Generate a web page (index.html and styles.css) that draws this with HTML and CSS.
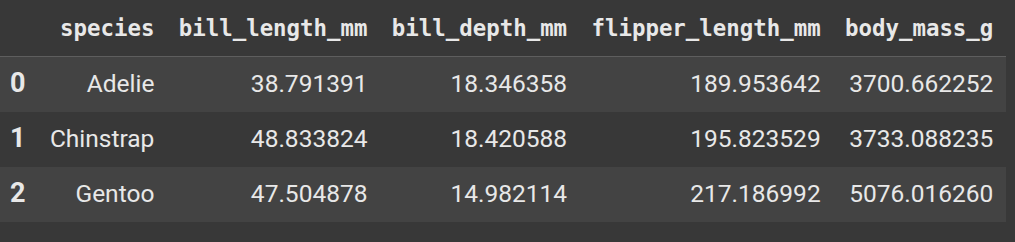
FILE: index.html
```html
<!DOCTYPE html>
<html>
<head>
<meta charset="utf-8">
<link rel="stylesheet" href="styles.css">
</head>
<body>
<table class="df">
  <thead>
    <tr>
      <th class="idx"></th>
      <th>species</th>
      <th>bill_length_mm</th>
      <th>bill_depth_mm</th>
      <th>flipper_length_mm</th>
      <th>body_mass_g</th>
    </tr>
  </thead>
  <tbody>
    <tr class="odd">
      <th class="idx">0</th>
      <td>Adelie</td>
      <td>38.791391</td>
      <td>18.346358</td>
      <td>189.953642</td>
      <td>3700.662252</td>
    </tr>
    <tr>
      <th class="idx">1</th>
      <td>Chinstrap</td>
      <td>48.833824</td>
      <td>18.420588</td>
      <td>195.823529</td>
      <td>3733.088235</td>
    </tr>
    <tr class="odd">
      <th class="idx">2</th>
      <td>Gentoo</td>
      <td>47.504878</td>
      <td>14.982114</td>
      <td>217.186992</td>
      <td>5076.016260</td>
    </tr>
  </tbody>
</table>
</body>
</html>
```
FILE: styles.css
```css
html, body {
  margin: 0;
  padding: 0;
  background: #383838;
}
body {
  width: 1015px;
  height: 242px;
  overflow: hidden;
}
.df {
  border-collapse: collapse;
  border-spacing: 0;
  color: #e8e8e8;
}
.df thead th {
  font-family: "DejaVu Sans Mono", monospace;
  font-weight: bold;
  font-size: 22.4px;
  line-height: 29px;
  padding: 14px 12.2px 13px 12.2px;
  text-align: right;
  border-bottom: 1px solid #5e5e5e;
  white-space: nowrap;
}
.df td {
  font-family: Roboto, "Noto Sans", sans-serif;
  font-size: 24.5px;
  line-height: 29px;
  padding: 12px 12.2px 14px 12.2px;
  text-align: right;
  white-space: nowrap;
}
.df tbody th.idx {
  font-family: Roboto, "Noto Sans", sans-serif;
  font-weight: bold;
  font-size: 27px;
  line-height: 29px;
  padding: 12px 12.2px 14px 10px;
  text-align: left;
}
.df tr.odd {
  background: #434343;
}
```
